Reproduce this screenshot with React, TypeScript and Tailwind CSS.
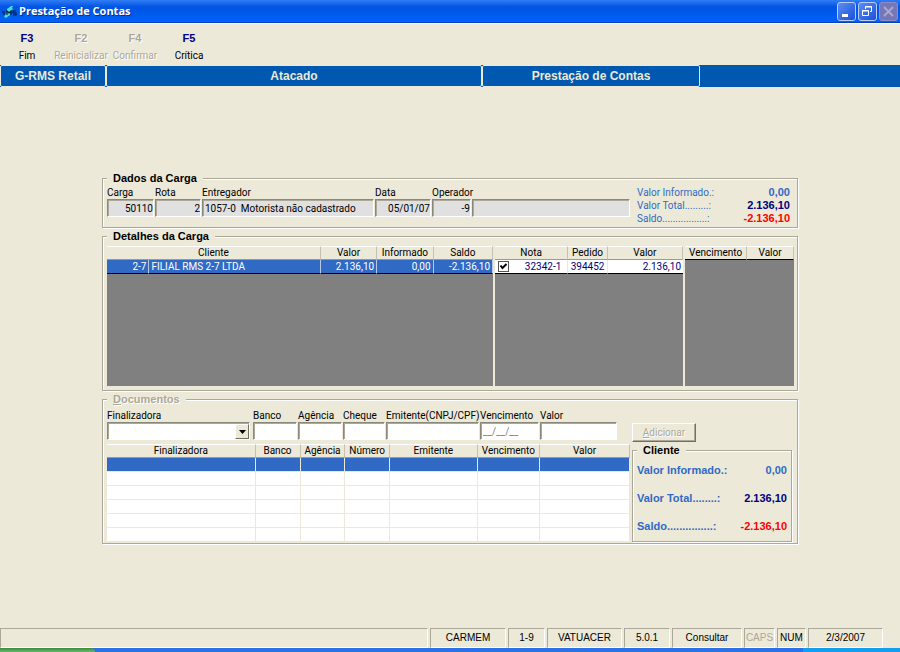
import { useState } from "react";
import type { ReactNode } from "react";

const SUNKEN =
  "border border-[#8a8878] border-r-white border-b-white shadow-[inset_1px_1px_0_#aca899]";
const HEAD =
  "h-3.5 border-r border-b border-[#9d9a8a] border-t border-t-white border-r-[#c5c2b2] bg-[#ece9d8] p-0 text-center font-normal leading-3 text-black";

/** Toolbar function key */
function FunctionKey({ code, label, disabled }: { code: string; label: string; disabled?: boolean }) {
  return (
    <button
      type="button"
      disabled={disabled}
      className="flex w-[54px] flex-col items-center gap-1 text-[#000080] disabled:text-[#aca899] disabled:[text-shadow:1px_1px_0_#fff]"
    >
      <span className="font-['Liberation_Sans',sans-serif] text-[11px] leading-[13px] font-bold">{code}</span>
      <span className={disabled ? "leading-[13px]" : "leading-[13px] text-black"}>{label}</span>
    </button>
  );
}

/** Etched group box */
function GroupBox({
  title,
  disabled,
  className = "",
  children,
}: {
  title: ReactNode;
  disabled?: boolean;
  className?: string;
  children: ReactNode;
}) {
  return (
    <fieldset
      disabled={disabled}
      className={`min-w-0 border border-[#aca899] pl-1 shadow-[1px_1px_0_#fff,inset_1px_1px_0_#fff] ${className}`}
    >
      <legend
        className={`h-3 bg-[#ece9d8] px-1.5 font-['Liberation_Sans',sans-serif] text-[11px] leading-3 font-bold ${
          disabled ? "text-[#aca899] [text-shadow:1px_1px_0_#fff]" : "text-black"
        }`}
      >
        {title}
      </legend>
      {children}
    </fieldset>
  );
}

/** Label over a text box */
function Field({
  id,
  label,
  value = "",
  readOnly,
  right,
}: {
  id: string;
  label: string;
  value?: string;
  readOnly?: boolean;
  right?: boolean;
}) {
  return (
    <div className="flex min-w-0 flex-col">
      <label htmlFor={id} className="h-[13px] leading-[13px] whitespace-nowrap">
        {label}
      </label>
      <input
        id={id}
        aria-label={label || "Nome do operador"}
        defaultValue={value}
        readOnly={readOnly}
        className={`h-[18px] w-full min-w-0 px-0.5 ${SUNKEN} ${
          readOnly ? "bg-[#e0e0e0] text-black" : "bg-white text-[#808080]"
        } ${right ? "pr-0 text-right" : ""}`}
      />
    </div>
  );
}

function Totals({ bold }: { bold?: boolean }) {
  const rows = [
    { label: "Valor Informado.:", value: "0,00", color: "text-[#316ac5]" },
    { label: bold ? "Valor Total........:" : "Valor Total.........:", value: "2.136,10", color: "text-[#000080]" },
    { label: bold ? "Saldo...............:" : "Saldo.................:", value: "-2.136,10", color: "text-[#ff0000]" },
  ];
  return (
    <dl className={bold ? "flex flex-col gap-[15px]" : "flex flex-col"}>
      {rows.map((r) => (
        <div key={r.label} className="flex justify-between leading-[13px]">
          <dt
            className={
              bold
                ? "font-['Liberation_Sans',sans-serif] text-[11px] font-bold text-[#316ac5]"
                : "text-[#316ac5]"
            }
          >
            {r.label}
          </dt>
          <dd className={`font-['Liberation_Sans',sans-serif] text-[11px] font-bold ${r.color}`}>{r.value}</dd>
        </div>
      ))}
    </dl>
  );
}

function ClientTable() {
  const cell = "border-r border-[#b8c8e4] px-0.5 py-0";
  return (
    <div className="h-[140px] bg-[#808080]">
      <table className="w-full table-fixed border-separate border-spacing-0">
        <colgroup>
          <col className="w-[11%]" />
          <col className="w-[44.4%]" />
          <col className="w-[14.6%]" />
          <col className="w-[14.6%]" />
          <col className="w-[15.4%]" />
        </colgroup>
        <thead>
          <tr>
            <th colSpan={2} className={HEAD}>Cliente</th>
            <th className={HEAD}>Valor</th>
            <th className={HEAD}>Informado</th>
            <th className={HEAD}>Saldo</th>
          </tr>
        </thead>
        <tbody>
          <tr className="h-3.5 bg-[#316ac5] text-right leading-[13px] text-white [&>td]:border-b [&>td]:border-b-black">
            <td className={cell}>2-7</td>
            <td className={`${cell} text-left`}>FILIAL RMS 2-7 LTDA</td>
            <td className={cell}>2.136,10</td>
            <td className={cell}>0,00</td>
            <td className={cell}>-2.136,10</td>
          </tr>
        </tbody>
      </table>
    </div>
  );
}

function InvoiceTable() {
  const [checked, setChecked] = useState(true);
  return (
    <div className="h-[140px] bg-[#808080]">
      <table className="w-full table-fixed border-separate border-spacing-0">
        <colgroup>
          <col className="w-[9%]" />
          <col className="w-[30%]" />
          <col className="w-[21%]" />
          <col className="w-[40%]" />
        </colgroup>
        <thead>
          <tr>
            <th colSpan={2} className={HEAD}>Nota</th>
            <th className={HEAD}>Pedido</th>
            <th className={HEAD}>Valor</th>
          </tr>
        </thead>
        <tbody>
          <tr className="h-3.5 bg-white text-right leading-[13px] text-[#000080] [&>td]:border-b [&>td]:border-b-black">
            <td className="p-0">
              <label className="relative ml-[3px] block size-[11px]">
                <input
                  type="checkbox"
                  aria-label="Nota 32342-1"
                  checked={checked}
                  onChange={(e) => setChecked(e.target.checked)}
                  className="block size-[11px] appearance-none border border-[#555] bg-white"
                />
                {checked && (
                  <svg viewBox="0 0 11 11" className="pointer-events-none absolute inset-0 size-[11px]">
                    <path d="M2.5 4.5 4.5 7 8.5 3" fill="none" stroke="#000" strokeWidth="2" />
                  </svg>
                )}
              </label>
            </td>
            <td className="border-r border-[#ece9d8] px-1.5 py-0">32342-1</td>
            <td className="border-r border-[#ece9d8] px-0.5 py-0 text-center">394452</td>
            <td className="px-0.5 py-0">2.136,10</td>
          </tr>
        </tbody>
      </table>
    </div>
  );
}

function DueTable() {
  return (
    <div className="h-[140px] bg-[#808080]">
      <table className="w-full table-fixed border-separate border-spacing-0">
        <thead>
          <tr>
            <th className={`${HEAD} w-[57%] border-b-black`}>Vencimento</th>
            <th className={`${HEAD} border-b-black`}>Valor</th>
          </tr>
        </thead>
      </table>
    </div>
  );
}

const DOC_COLUMNS = [
  { name: "Finalizadora", width: "w-[28.4%]" },
  { name: "Banco", width: "w-[8.6%]" },
  { name: "Agência", width: "w-[8.6%]" },
  { name: "Número", width: "w-[8.5%]" },
  { name: "Emitente", width: "w-[16.8%]" },
  { name: "Vencimento", width: "w-[11.9%]" },
  { name: "Valor", width: "w-[17.2%]" },
];

function DocumentsTable() {
  return (
    <table className="mt-1 w-full table-fixed border-separate border-spacing-0">
      <thead>
        <tr>
          {DOC_COLUMNS.map((c) => (
            <th key={c.name} className={`${HEAD} ${c.width}`}>{c.name}</th>
          ))}
        </tr>
      </thead>
      <tbody>
        {[0, 1, 2, 3, 4, 5].map((row) => (
          <tr key={row} className={row === 0 ? "h-3.5 bg-[#316ac5]" : "h-3.5 bg-white"}>
            {DOC_COLUMNS.map((c) => (
              <td key={c.name} className="border-r border-b border-[#ece9d8] p-0" />
            ))}
          </tr>
        ))}
      </tbody>
    </table>
  );
}

function TitleBar() {
  const button =
    "flex size-[19px] items-center justify-center rounded-[3px] border border-[#b9cdf8] bg-linear-to-br from-[#5b8df5] to-[#1c4fd6]";
  return (
    <header className="flex h-[23px] items-center bg-linear-to-b from-[#2f7df5] via-[#0054e3] via-30% to-[#0062fb] pr-0.5 pl-0.5 shadow-[inset_0_-1px_0_#0043c0]">
      <svg viewBox="0 0 16 16" className="size-4" aria-hidden="true">
        <path d="M9 2 5 5v3l-3 5 2 1 4-3V8l3-3-1-1 1-2z" fill="#3fe0e0" />
        <path d="M0 8h3M1 10h2M5 11V7l2 2 2-2v4M14 7h-3v2h3v2h-3" fill="none" stroke="#04203a" strokeWidth="1.2" />
      </svg>
      <h1 className="flex-1 pl-px font-['Open_Sans','Noto_Sans',sans-serif] text-[11px] font-bold text-white [text-shadow:1px_1px_0_#0a2f87]">
        Prestação de Contas
      </h1>
      <div className="flex gap-0.5">
        <button type="button" aria-label="Minimizar" className={button}>
          <svg viewBox="0 0 17 17" className="size-[17px]">
            <path d="M4 11h6v3H4z" fill="#fff" />
          </svg>
        </button>
        <button type="button" aria-label="Restaurar" className={button}>
          <svg viewBox="0 0 17 17" className="size-[17px]" fill="none" stroke="#fff">
            <path d="M6.500 6V3.500h6v5H11M6 4h7" />
            <path d="M3.500 7.500h6v5h-6zM3 8h7" />
          </svg>
        </button>
        <button
          type="button"
          aria-label="Fechar"
          disabled
          className="flex size-[19px] items-center justify-center rounded-[3px] border border-[#8c8cc8] bg-[#7478b8]"
        >
          <svg viewBox="0 0 17 17" className="size-[17px]">
            <path d="m4 4 9 9M13 4l-9 9" stroke="#a9a8cc" strokeWidth="2" />
          </svg>
        </button>
      </div>
    </header>
  );
}

const STATUS = [
  { text: "CARMEM", width: "w-[76px]" },
  { text: "1-9", width: "w-[37px]" },
  { text: "VATUACER", width: "w-[75px]" },
  { text: "5.0.1", width: "w-[46px]" },
  { text: "Consultar", width: "w-[70px]" },
  { text: "CAPS", width: "w-[31px]", off: true },
  { text: "NUM", width: "w-[29px]" },
  { text: "2/3/2007", width: "w-[75px]" },
];

function StatusBar() {
  const panel = "border border-[#aca899] border-r-white border-b-white";
  return (
    <footer>
      <div className="flex h-5 gap-0.5 pr-[17px] text-center font-['Liberation_Sans',sans-serif] text-[10px] leading-[18px]">
        <div className={`flex-1 ${panel}`} />
        {STATUS.map((s) => (
          <div key={s.text} className={`${panel} ${s.width} ${s.off ? "text-[#aca899]" : "text-black"}`}>
            {s.text}
          </div>
        ))}
      </div>
      <div className="flex h-1 bg-[#2b72e8]">
        <div className="w-[95px] rounded-tr-sm bg-linear-to-b from-[#3c8a3c] to-[#6ab86a]" />
        <div className="flex-1" />
        <div className="w-[97px] bg-[#12a0ee]" />
      </div>
    </footer>
  );
}

export default function App() {
  const tab = "rounded-xs border border-[#ece9d8] py-px text-center";
  return (
    <div className="flex min-h-screen flex-col bg-[#ece9d8] font-[Roboto,'Liberation_Sans',sans-serif] text-[10px] text-black">
      <TitleBar />
      <nav className="flex h-[42px] border-t border-white pt-2">
        <FunctionKey code="F3" label="Fim" />
        <FunctionKey code="F2" label="Reinicializar" disabled />
        <FunctionKey code="F4" label="Confirmar" disabled />
        <FunctionKey code="F5" label="Crítica" />
      </nav>
      <div className="h-[22px] bg-[#0058b0] font-['Liberation_Sans',sans-serif] text-xs leading-[18px] font-bold text-[#ece9d8]">
        <div className="grid h-full w-7/9 grid-cols-[106fr_376fr_218fr]">
          <div className={tab}>G-RMS Retail</div>
          <div className={tab}>Atacado</div>
          <div className={tab}>Prestação de Contas</div>
        </div>
      </div>

      <main className="mx-auto flex w-full max-w-[696px] flex-1 flex-col gap-0.5 pt-[85px]">
        <GroupBox title="Dados da Carga" className="h-[56px] pr-[7px]">
          <div className="flex justify-between">
            <div className="grid w-[523px] grid-cols-[47fr_46fr_172fr_56fr_39fr_158fr] gap-x-px pt-0.5">
              <Field id="carga" label="Carga" value="50110" readOnly right />
              <Field id="rota" label="Rota" value="2" readOnly right />
              <Field id="entregador" label="Entregador" value="1057-0  Motorista não cadastrado" readOnly />
              <Field id="data" label="Data" value="05/01/07" readOnly right />
              <Field id="operador" label="Operador" value="-9" readOnly right />
              <Field id="operador-nome" label="" readOnly />
            </div>
            <div className="w-[153px] pt-0.5">
              <Totals />
            </div>
          </div>
        </GroupBox>

        <GroupBox title="Detalhes da Carga" className="pr-[3px] pb-1">
          <div className="grid grid-cols-[386fr_188fr_109fr] gap-x-0.5 pt-1">
            <ClientTable />
            <InvoiceTable />
            <DueTable />
          </div>
        </GroupBox>

        <GroupBox disabled title={<><u>D</u>ocumentos</>} className="pr-1 pb-px">
          <div className="flex gap-0.5 pt-1">
            <div className="w-[523px]">
              <div className="grid w-[510px] grid-cols-[145fr_44fr_44fr_42fr_93fr_59fr_77fr] gap-x-px">
                <div className="pr-0.5">
                  <label htmlFor="finalizadora" className="block h-[13px] leading-[13px]">
                    Finalizadora
                  </label>
                  <div className="relative">
                    <select id="finalizadora" className={`block h-[18px] w-full appearance-none bg-white ${SUNKEN}`}>
                      <option value="" />
                    </select>
                    <span className="pointer-events-none absolute top-0.5 right-px flex h-[15px] w-3.5 items-center justify-center border border-white border-r-[#716f64] border-b-[#716f64] bg-[#ece9d8]">
                      <svg viewBox="0 0 7 4" className="h-1 w-[7px]">
                        <path d="M0 0h7L3.500 4z" />
                      </svg>
                    </span>
                  </div>
                </div>
                <Field id="banco" label="Banco" />
                <Field id="agencia" label="Agência" />
                <Field id="cheque" label="Cheque" />
                <Field id="emitente" label="Emitente(CNPJ/CPF)" />
                <Field id="vencimento" label="Vencimento" value="__/__/__" />
                <Field id="valor" label="Valor" />
              </div>
              <DocumentsTable />
            </div>
            <div className="flex w-[160px] flex-col pt-3.5">
              <button
                type="button"
                className="h-[19px] w-16 border border-white border-r-[#716f64] border-b-[#716f64] leading-[17px] text-[#aca899] shadow-[inset_-1px_-1px_0_#aca899] [text-shadow:1px_1px_0_#fff]"
              >
                <u>A</u>dicionar
              </button>
              <GroupBox title="Cliente" className="mt-0.5 h-[98px] pr-1">
                <div className="pt-2">
                  <Totals bold />
                </div>
              </GroupBox>
            </div>
          </div>
        </GroupBox>
      </main>

      <StatusBar />
    </div>
  );
}
